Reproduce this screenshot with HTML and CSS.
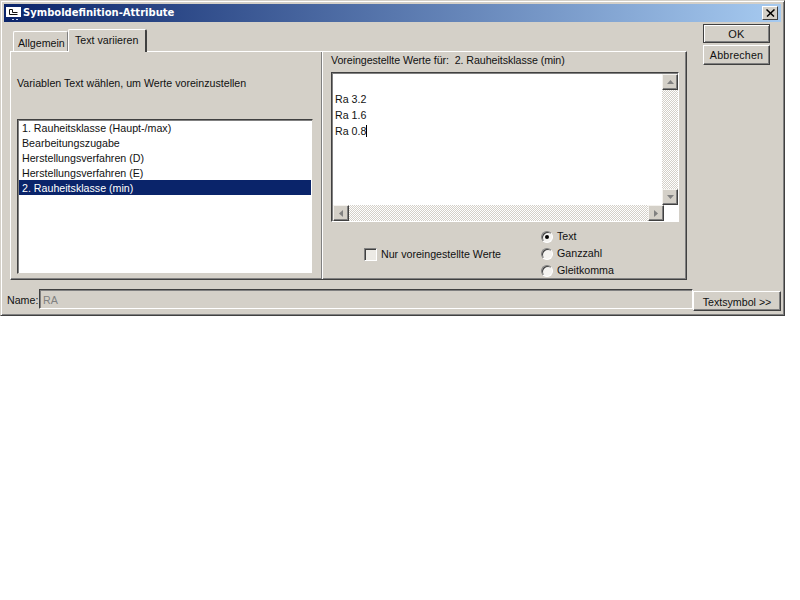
FILE: index.html
```html
<!DOCTYPE html>
<html lang="de">
<head>
<meta charset="utf-8">
<title>Symboldefinition-Attribute</title>
<link rel="stylesheet" href="styles.css">
</head>
<body>
<div class="window">
  <div class="titlebar">
    <svg class="appicon" width="16" height="16" viewBox="0 0 16 16">
      <rect x="0" y="2" width="15" height="10" fill="#fff"/>
      <path d="M3.500 4.500h3v3h5M3.500 4.500v5h8" fill="none" stroke="#111" stroke-width="1"/>
      <rect x="6" y="14" width="2" height="1" fill="#c8d4e8"/>
      <rect x="10" y="14" width="2" height="1" fill="#c8d4e8"/>
    </svg>
    <span class="title">Symboldefinition-Attribute</span>
    <span class="close"><svg width="9" height="8" viewBox="0 0 9 8"><path d="M0.500 0.500l7.500 7M8.500 0.500l-7.500 7" fill="none" stroke="#000" stroke-width="1.500"/></svg></span>
  </div>
  <div class="main">
    <div class="tabarea">
      <div class="tabs">
        <div class="tab">Allgemein</div>
        <div class="tab active">Text variieren</div>
      </div>
      <div class="panel">
        <div class="leftpane">
          <p class="hint">Variablen Text wählen, um Werte voreinzustellen</p>
          <ul class="list">
            <li>1. Rauheitsklasse (Haupt-/max)</li>
            <li>Bearbeitungszugabe</li>
            <li>Herstellungsverfahren (D)</li>
            <li>Herstellungsverfahren (E)</li>
            <li class="selected">2. Rauheitsklasse (min)</li>
          </ul>
        </div>
        <div class="rightpane">
          <div class="valuelabel">Voreingestellte Werte für:&nbsp; 2. Rauheitsklasse (min)</div>
          <div class="editor">
            <div class="editrow">
              <div class="edittext">
                <div class="line">&nbsp;</div>
                <div class="line">Ra 3.2</div>
                <div class="line">Ra 1.6</div>
                <div class="line"><span class="caret">Ra 0.8</span></div>
              </div>
              <div class="vscroll">
                <span class="sbtn"><svg width="7" height="4" viewBox="0 0 7 4"><path d="M3.500 0L7 4H0z" fill="#808080"/></svg></span>
                <span class="sbtn"><svg width="7" height="4" viewBox="0 0 7 4"><path d="M0 0h7L3.500 4z" fill="#808080"/></svg></span>
              </div>
            </div>
            <div class="hscroll">
              <span class="sbtn"><svg width="4" height="7" viewBox="0 0 4 7"><path d="M4 0v7L0 3.500z" fill="#808080"/></svg></span>
              <span class="sbtn"><svg width="4" height="7" viewBox="0 0 4 7"><path d="M0 0v7L4 3.500z" fill="#808080"/></svg></span>
            </div>
          </div>
          <div class="options">
            <label class="check"><span class="checkbox"></span>Nur voreingestellte Werte</label>
            <div class="radios">
              <label class="radio"><span class="dot on"></span>Text</label>
              <label class="radio"><span class="dot"></span>Ganzzahl</label>
              <label class="radio"><span class="dot"></span>Gleitkomma</label>
            </div>
          </div>
        </div>
      </div>
    </div>
    <div class="buttons">
      <div class="btn default">OK</div>
      <div class="btn">Abbrechen</div>
    </div>
  </div>
  <div class="footer">
    <span class="namelabel">Name:</span>
    <div class="namefield">RA</div>
    <div class="btn symbol">Textsymbol &gt;&gt;</div>
  </div>
</div>
</body>
</html>
```
FILE: styles.css
```css
* { box-sizing: border-box; }
html, body { margin: 0; padding: 0; background: #fff; }
body { font: 10.67px/13px "Liberation Sans", Arial, sans-serif; color: #111; }
p, ul { margin: 0; padding: 0; list-style: none; }

.window {
  width: 785px;
  height: 316px;
  background: #d4d0c8;
  border: 1px solid;
  border-color: #d4d0c8 #404040 #404040 #d4d0c8;
  box-shadow: inset 1px 1px 0 #fff, inset -1px -1px 0 #808080;
  padding: 3px;
  display: flex;
  flex-direction: column;
}

.titlebar {
  height: 18px;
  display: flex;
  align-items: center;
  padding: 0 3px 0 2px;
  background: linear-gradient(to right, #0a246a, #a6caf0);
  color: #fff;
  flex: none;
}
.appicon { flex: none; }
.title { font: bold 10px/18px "DejaVu Sans", sans-serif; margin-left: 1px; flex: 1; }
.close {
  width: 16px;
  height: 14px;
  background: #d4d0c8;
  border: 1px solid;
  border-color: #fff #404040 #404040 #fff;
  display: flex;
  align-items: center;
  justify-content: center;
}

.main { display: flex; align-items: flex-start; padding: 2px 0 0 6px; height: 258px; flex: none; }
.tabarea { width: 677px; flex: none; padding-top: 4px; }
.tabs { display: flex; height: 23px; align-items: flex-end; padding-left: 3px; }
.tab {
  width: 55px;
  height: 20px;
  padding: 5px 0 0 4px;
  border: 1px solid #fff;
  border-right-color: #808080;
  border-bottom: 0;
  border-radius: 2px 2px 0 0;
}
.tab.active {
  width: 79px;
  height: 23px;
  padding: 4px 0 0 6px;
  border-right: 2px solid #404040;
  margin-bottom: -1px;
  background: #d4d0c8;
  position: relative;
}
.panel {
  height: 229px;
  display: flex;
  border: 1px solid;
  border-color: #fff #404040 #404040 #fff;
  box-shadow: inset -1px -1px 0 #808080;
}
.leftpane { width: 310px; padding: 25px 0 0 6px; flex: none; }
.hint { height: 42px; }
.list {
  width: 296px;
  height: 155px;
  background: #fff;
  border: 1px solid;
  border-color: #404040 #d4d0c8 #d4d0c8 #404040;
  box-shadow: inset 1px 1px 0 #808080;
  padding: 0 1px 0 1px;
}
.list li { height: 15px; line-height: 13px; padding: 2px 0 0 3px; }
.list li.selected { background: #0a246a; color: #fff; }

.rightpane {
  flex: 1;
  border-left: 1px solid #808080;
  box-shadow: inset 1px 0 0 #fff;
  padding: 1px 0 0 9px;
}
.valuelabel { height: 19px; line-height: 14px; letter-spacing: -0.06px; }
.editor {
  width: 348px;
  height: 150px;
  background: #fff;
  border: 1px solid;
  border-color: #404040 #fff #fff #404040;
  box-shadow: inset 1px 1px 0 #808080;
  padding: 1px 0 0 1px;
  display: flex;
  flex-direction: column;
}
.editrow { display: flex; flex: 1; min-height: 0; }
.edittext { flex: 1; padding: 1px 0 0 2px; }
.line { height: 16px; line-height: 16px; }
.caret { border-right: 1px solid #000; }
.vscroll, .hscroll {
  display: flex;
  justify-content: space-between;
  background: repeating-conic-gradient(#d4d0c8 0 25%, #fff 0 50%) 0 0 / 2px 2px;
  flex: none;
}
.vscroll { width: 16px; flex-direction: column; }
.hscroll { height: 16px; width: 331px; }
.sbtn {
  width: 16px;
  height: 16px;
  background: #d4d0c8;
  border: 1px solid;
  border-color: #f4f2ee #404040 #404040 #f4f2ee;
  box-shadow: inset -1px -1px 0 #808080;
  display: flex;
  align-items: center;
  justify-content: center;
}

.options { display: flex; padding: 6px 0 0 33px; }
.check { display: flex; align-items: center; width: 177px; height: 44px; margin-top: 4px; }
.checkbox {
  width: 13px;
  height: 13px;
  margin-right: 4px;
  background: #eceae5;
  border: 1px solid;
  border-color: #808080 #fff #fff #808080;
  box-shadow: inset 1px 1px 0 #404040;
}
.radios { display: flex; flex-direction: column; }
.radio { display: flex; align-items: center; height: 17px; }
.dot {
  width: 12px;
  height: 12px;
  margin-right: 4px;
  border-radius: 50%;
  background: #f4f3f0;
  border: 1px solid;
  border-color: #808080 #fff #fff #808080;
  box-shadow: inset 1px 1px 0 #404040;
  display: flex;
  align-items: center;
  justify-content: center;
}
.dot.on::after { content: ""; width: 4px; height: 4px; border-radius: 50%; background: #000; }

.buttons { display: flex; flex-direction: column; gap: 2px; margin-left: 16px; }
.btn {
  width: 67px;
  height: 20px;
  padding-top: 1px;
  text-align: center;
  line-height: 17px;
  letter-spacing: 0.2px;
  background: #d4d0c8;
  border: 1px solid;
  border-color: #fff #404040 #404040 #fff;
  box-shadow: inset -1px -1px 0 #808080;
}
.btn.default { height: 19px; border-color: #404040; box-shadow: inset 1px 1px 0 #fff, inset -1px -1px 0 #808080; font-size: 11px; }

.footer { display: flex; align-items: flex-start; padding: 9px 0 0 3px; flex: 1; }
.namelabel { width: 32px; flex: none; margin-top: 5px; }
.namefield {
  width: 654px;
  height: 20px;
  color: #808080;
  line-height: 17px;
  padding: 2px 0 0 3px;
  border: 1px solid;
  border-color: #404040 #fff #fff #404040;
  box-shadow: inset 1px 1px 0 #808080;
}
.btn.symbol { width: 88px; height: 20px; margin-top: 2px; padding-top: 2px; letter-spacing: 0; }
```
